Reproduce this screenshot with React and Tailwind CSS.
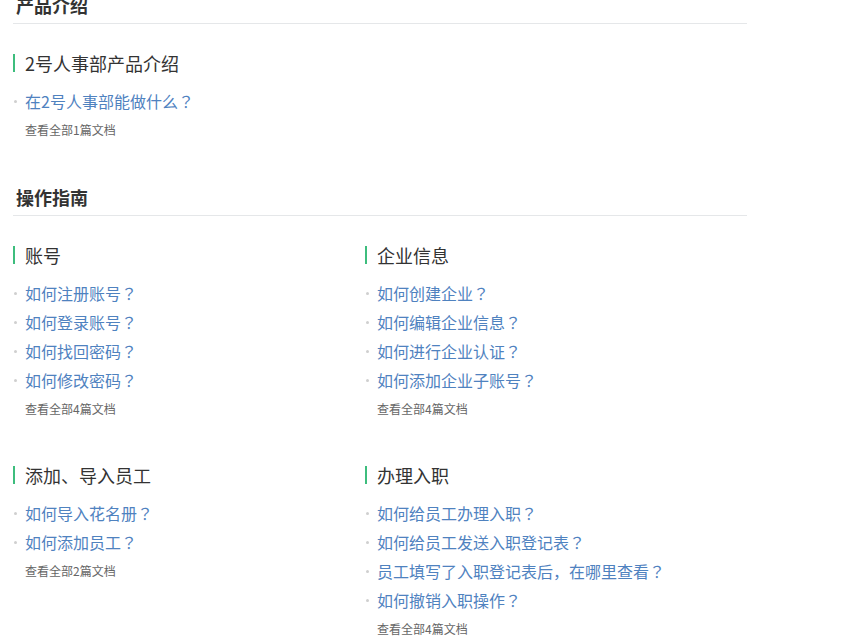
import React from "react";

const font = { fontFamily: '"Microsoft YaHei", "Noto Sans CJK SC", "Noto Sans", sans-serif' };
const qFont = { fontFamily: '"Noto Sans CJK TC", "Noto Sans CJK SC", sans-serif' };

function withQ(text) {
  const parts = text.split("？");
  const out = [];
  parts.forEach((p, i) => {
    out.push(<React.Fragment key={"t" + i}>{p}</React.Fragment>);
    if (i < parts.length - 1) out.push(<span key={"q" + i} style={qFont}>？</span>);
  });
  return out;
}

function Group({ title, links, count }) {
  return (
    <div>
      <div className="flex items-center h-[24px]">
        <div className="w-[2px] h-[18px] bg-[#3dbd7d]" />
        <div className="ml-[10px] text-[18px] leading-[24px] text-[#333]">{title}</div>
      </div>
      <ul className="mt-[12px]">
        {links.map((l) => (
          <li key={l} className="flex items-center h-[29px]">
            <span className="ml-[1px] w-[3px] h-[3px] rounded-full bg-[#cfcfcf]" />
            <a className="ml-[8px] text-[16px] leading-[29px] text-[#4f82bf] whitespace-nowrap">{withQ(l)}</a>
          </li>
        ))}
      </ul>
      <div className="mt-[4px] pl-[12px] text-[12px] leading-[20px] text-[#666]">查看全部{count}篇文档</div>
    </div>
  );
}

function Section({ title, children, className = "" }) {
  return (
    <section className={className}>
      <div className="pl-[3px] pb-[6px] border-b border-[#e5e7e9] text-[18px] leading-[24px] font-bold text-[#333]">{title}</div>
      <div className="mt-[27px] grid grid-cols-[352px_1fr] gap-y-[44px]">{children}</div>
    </section>
  );
}

export default function App() {
  return (
    <div className="bg-white min-h-[641px] overflow-hidden" style={font}>
      <div className="ml-[13px] w-[734px] -mt-[7px]">
        <Section title="产品介绍">
          <Group title="2号人事部产品介绍" links={["在2号人事部能做什么？"]} count={1} />
        </Section>
        <Section title="操作指南" className="mt-[45px]">
          <Group
            title="账号"
            links={["如何注册账号？", "如何登录账号？", "如何找回密码？", "如何修改密码？"]}
            count={4}
          />
          <Group
            title="企业信息"
            links={["如何创建企业？", "如何编辑企业信息？", "如何进行企业认证？", "如何添加企业子账号？"]}
            count={4}
          />
          <Group title="添加、导入员工" links={["如何导入花名册？", "如何添加员工？"]} count={2} />
          <Group
            title="办理入职"
            links={[
              "如何给员工办理入职？",
              "如何给员工发送入职登记表？",
              "员工填写了入职登记表后，在哪里查看？",
              "如何撤销入职操作？",
            ]}
            count={4}
          />
        </Section>
      </div>
    </div>
  );
}
